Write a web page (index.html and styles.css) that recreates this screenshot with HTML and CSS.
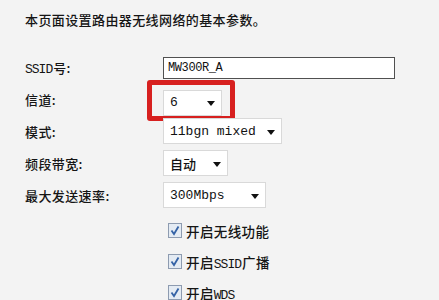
FILE: index.html
```html
<!DOCTYPE html>
<html lang="zh-CN">
<head>
	<meta charset="UTF-8">
	<title>无线网络基本设置</title>
	<link rel="stylesheet" href="styles.css">
</head>
<body>

<p class="intro">本页面设置路由器无线网络的基本参数。</p>

<div class="form">
	<div class="row">
		<span class="label"><span class="en">SSID</span>号:</span>
		<div class="text-input">MW300R_A</div>
	</div>
	<div class="row">
		<span class="label">信道:</span>
		<div class="select w-channel marked"><span>6</span><i class="arrow"></i></div>
	</div>
	<div class="row">
		<span class="label">模式:</span>
		<div class="select w-mode"><span>11bgn mixed</span><i class="arrow"></i></div>
	</div>
	<div class="row">
		<span class="label">频段带宽:</span>
		<div class="select w-band"><span>自动</span><i class="arrow"></i></div>
	</div>
	<div class="row">
		<span class="label">最大发送速率:</span>
		<div class="select w-rate"><span>300Mbps</span><i class="arrow"></i></div>
	</div>

	<div class="checks">
		<label class="check">
			<svg width="14" height="15" viewBox="0 0 14 15"><rect x="0.5" y="0.5" width="13" height="14" fill="#e4ebf3" stroke="#8d9bb0"/><path d="M3.5 7.5 L6 11 L10.5 3.5" fill="none" stroke="#3563a6" stroke-width="1.8"/></svg>
			<span>开启无线功能</span>
		</label>
		<label class="check">
			<svg width="14" height="15" viewBox="0 0 14 15"><rect x="0.5" y="0.5" width="13" height="14" fill="#e4ebf3" stroke="#8d9bb0"/><path d="M3.5 7.5 L6 11 L10.5 3.5" fill="none" stroke="#3563a6" stroke-width="1.8"/></svg>
			<span>开启<span class="en">SSID</span>广播</span>
		</label>
		<label class="check">
			<svg width="14" height="15" viewBox="0 0 14 15"><rect x="0.5" y="0.5" width="13" height="14" fill="#e4ebf3" stroke="#8d9bb0"/><path d="M3.5 7.5 L6 11 L10.5 3.5" fill="none" stroke="#3563a6" stroke-width="1.8"/></svg>
			<span>开启<span class="en">WDS</span></span>
		</label>
	</div>
</div>

</body>
</html>
```

FILE: styles.css
```css
body {
	margin: 0;
	padding: 0 0 0 25px;
	background-color: #f3f3f3;
	color: #151515;
	font-family: "Noto Sans CJK SC", sans-serif;
	font-size: 13px;
	font-weight: 500;
	letter-spacing: 0.4px;
	overflow: hidden;
}

.intro {
	margin: 10px 0 21px 0;
	line-height: 20px;
}

.en {
	font-family: "Liberation Mono", monospace;
	font-size: 13px;
	letter-spacing: -1px;
	margin-right: 1px;
}

.row {
	display: flex;
	align-items: center;
	height: 32px;
}

.label {
	flex: none;
	width: 138px;
}

.text-input {
	box-sizing: border-box;
	width: 232px;
	height: 22px;
	margin-top: 2px;
	padding-left: 4px;
	background-color: #fff;
	border: 1px solid #505050;
	font-family: "Liberation Mono", monospace;
	font-size: 12px;
	letter-spacing: -0.4px;
	line-height: 20px;
	color: #111;
}

.select {
	position: relative;
	box-sizing: border-box;
	display: flex;
	align-items: center;
	justify-content: space-between;
	height: 26px;
	padding: 0 6px 0 6px;
	background-color: #fff;
	border: 1px solid #d9d9d9;
	font-family: "Liberation Mono", "Noto Sans CJK SC", monospace;
	font-size: 13px;
	letter-spacing: 0;
	color: #111;
}

.arrow {
	width: 0;
	height: 0;
	border-left: 4px solid transparent;
	border-right: 4px solid transparent;
	border-top: 5px solid #111;
	margin-top: 2px;
}

.w-channel { width: 59px; margin-top: 7px; }
.w-mode { width: 119px; }
.w-band { width: 65px; }
.w-rate { width: 103px; }

/* red highlight round the channel box */
.marked::after {
	content: '';
	position: absolute;
	left: -17px;
	top: -11px;
	right: -14px;
	bottom: -6px;
	border: 5px solid #d7201f;
	border-radius: 3px;
}

.checks {
	margin: 4px 0 0 143px;
}

.check {
	display: flex;
	align-items: center;
	gap: 4px;
	height: 31px;
	font-size: 13.5px;
}

.check svg {
	flex: none;
}
```
